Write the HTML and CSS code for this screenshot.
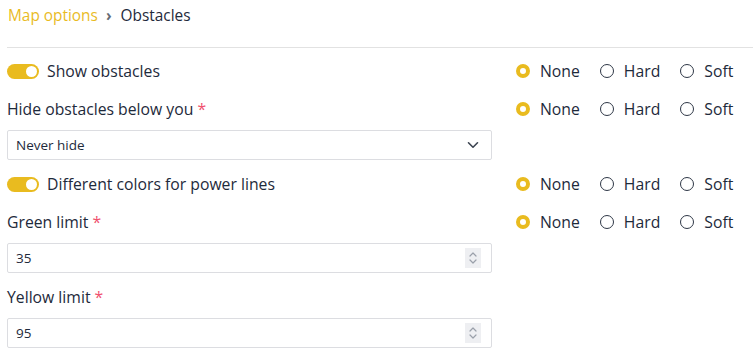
FILE: index.html
```html
<!DOCTYPE html>
<html lang="en">
<head>
  <meta charset="UTF-8">
  <meta name="viewport" content="width=device-width, initial-scale=1.0">
  <title>Obstacles</title>
  <link rel="stylesheet" href="styles.css">
</head>
<body>
  <div class="page">
    <nav class="breadcrumb">
      <a href="#" class="crumb-link">Map options</a>
      <span class="crumb-sep">›</span>
      <span class="crumb-current">Obstacles</span>
    </nav>

    <hr class="divider">

    <form class="form">
      <!-- Show obstacles -->
      <div class="field field-switch">
        <label class="switch">
          <input type="checkbox" checked>
          <span class="track"></span>
          <span class="switch-text">Show obstacles</span>
        </label>
      </div>
      <div class="choices">
        <label class="choice"><input type="radio" name="show" checked> None</label>
        <label class="choice"><input type="radio" name="show"> Hard</label>
        <label class="choice"><input type="radio" name="show"> Soft</label>
      </div>

      <!-- Hide obstacles below -->
      <div class="field">
        <label class="label">Hide obstacles below you <span class="req">*</span></label>
        <div class="box">
          <select class="box-input">
            <option>Never hide</option>
            <option>100 m</option>
            <option>300 m</option>
          </select>
          <svg class="chevron" width="12" height="8" viewBox="0 0 12 8" fill="none" stroke="currentColor" stroke-width="1.6" stroke-linecap="round" stroke-linejoin="round">
            <path d="M1.5 1.8 6 6.2l4.5-4.4"></path>
          </svg>
        </div>
      </div>
      <div class="choices">
        <label class="choice"><input type="radio" name="hide" checked> None</label>
        <label class="choice"><input type="radio" name="hide"> Hard</label>
        <label class="choice"><input type="radio" name="hide"> Soft</label>
      </div>

      <!-- Power line colors -->
      <div class="field field-switch">
        <label class="switch">
          <input type="checkbox" checked>
          <span class="track"></span>
          <span class="switch-text">Different colors for power lines</span>
        </label>
      </div>
      <div class="choices">
        <label class="choice"><input type="radio" name="colors" checked> None</label>
        <label class="choice"><input type="radio" name="colors"> Hard</label>
        <label class="choice"><input type="radio" name="colors"> Soft</label>
      </div>

      <!-- Green limit -->
      <div class="field">
        <label class="label">Green limit <span class="req">*</span></label>
        <div class="box">
          <input class="box-input" type="text" value="35">
          <span class="spin">
            <svg width="8" height="14" viewBox="0 0 8 14" fill="none" stroke="currentColor" stroke-width="1.2" stroke-linecap="round" stroke-linejoin="round">
              <path d="M1 5 4 2l3 3"></path>
              <path d="M1 9l3 3 3-3"></path>
            </svg>
          </span>
        </div>
      </div>
      <div class="choices">
        <label class="choice"><input type="radio" name="green" checked> None</label>
        <label class="choice"><input type="radio" name="green"> Hard</label>
        <label class="choice"><input type="radio" name="green"> Soft</label>
      </div>

      <!-- Yellow limit -->
      <div class="field">
        <label class="label">Yellow limit <span class="req">*</span></label>
        <div class="box">
          <input class="box-input" type="text" value="95">
          <span class="spin">
            <svg width="8" height="14" viewBox="0 0 8 14" fill="none" stroke="currentColor" stroke-width="1.2" stroke-linecap="round" stroke-linejoin="round">
              <path d="M1 5 4 2l3 3"></path>
              <path d="M1 9l3 3 3-3"></path>
            </svg>
          </span>
        </div>
      </div>
      <div class="choices"></div>
    </form>
  </div>
</body>
</html>
```

FILE: styles.css
```css
:root {
  --yellow: #e9bb1f;
  --text: #1e2a3b;
  --border: #dcdde1;
  --req: #f0506e;
}

* {
  margin: 0;
  padding: 0;
  box-sizing: border-box;
}

body {
  font-family: 'Open Sans', 'Noto Sans', sans-serif;
  color: var(--text);
  background: #ffffff;
  font-size: 15.75px;
}

.page {
  padding: 3px 0 0 7px;
}

.breadcrumb {
  display: flex;
  align-items: center;
  height: 24px;
  font-size: 15.4px;
  padding-left: 1px;
}

.crumb-link {
  color: var(--yellow);
  text-decoration: none;
}

.crumb-sep {
  color: #666c75;
  font-weight: 700;
  margin: 0 9px 0 8px;
}

.divider {
  border: none;
  border-top: 1px solid #e2e2e2;
  margin-top: 20px;
}

.form {
  display: grid;
  grid-template-columns: 485px auto;
  column-gap: 24px;
  margin-top: 11px;
}

.field {
  display: flex;
  flex-direction: column;
  padding-bottom: 12px;
}

.field-switch {
  padding-bottom: 14px;
}

.switch {
  display: flex;
  align-items: center;
  height: 24px;
  gap: 8px;
  cursor: pointer;
}

.switch input {
  display: none;
}

.track {
  width: 32px;
  height: 15px;
  border-radius: 8px;
  background: #d1d5db;
  display: flex;
  align-items: center;
  padding: 0 2px;
}

.track::after {
  content: '';
  width: 11px;
  height: 11px;
  border-radius: 50%;
  background: #ffffff;
}

.switch input:checked + .track {
  background: var(--yellow);
  justify-content: flex-end;
}

.label {
  line-height: 24px;
  margin-bottom: 9px;
}

.req {
  color: var(--req);
}

.box {
  display: flex;
  align-items: center;
  height: 30px;
  border: 1px solid var(--border);
  border-radius: 2px;
  padding: 0 9px 0 8px;
}

.box-input {
  flex: 1;
  border: none;
  outline: none;
  background: transparent;
  font-family: inherit;
  font-size: 13.5px;
  color: var(--text);
  appearance: none;
  height: 100%;
}

.chevron {
  color: #3b4350;
  margin-right: 3px;
  pointer-events: none;
}

.spin {
  display: flex;
  align-items: center;
  justify-content: center;
  width: 16px;
  height: 20px;
  background: #eeeff2;
  color: #9aa0aa;
  margin-right: 1px;
}

.choices {
  display: flex;
  align-items: flex-start;
  gap: 20px;
}

.choice {
  display: flex;
  align-items: center;
  gap: 10px;
  height: 24px;
  cursor: pointer;
}

.choice input {
  appearance: none;
  width: 14px;
  height: 14px;
  border-radius: 50%;
  border: 1.5px solid #2e3746;
  background: #ffffff;
  margin: 0;
}

.choice input:checked {
  border: 4px solid var(--yellow);
}
```
